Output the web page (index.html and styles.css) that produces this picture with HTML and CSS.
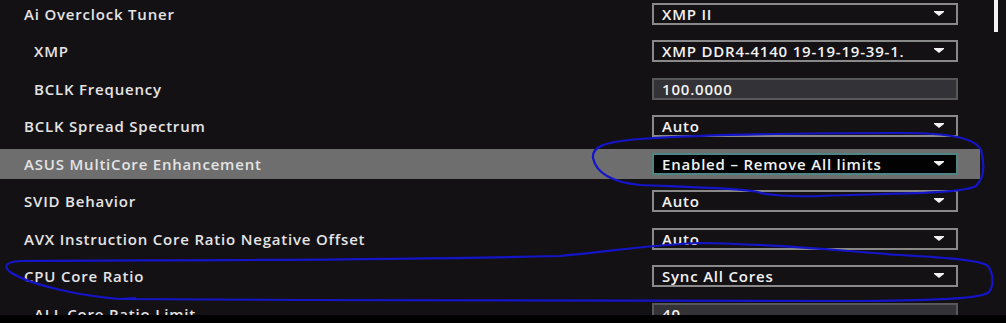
FILE: index.html
```html
<!DOCTYPE html>
<html>
  <head>
    <title>Ai Tweaker</title>
    <link rel="stylesheet" href="styles.css">
  </head>
  <body>
    <div class="screen">
      <div class="panel">
        <ul class="items">
          <li class="item">
            <span class="label">Ai Overclock Tuner</span>
            <div class="select"><span>XMP II</span><svg class="arrow" viewBox="0 0 10 6"><polygon points="0,0 10,0 10,1 5,5 0,1"/></svg></div>
          </li>
          <li class="item sub">
            <span class="label">XMP</span>
            <div class="select"><span>XMP DDR4-4140 19-19-19-39-1.</span><svg class="arrow" viewBox="0 0 10 6"><polygon points="0,0 10,0 10,1 5,5 0,1"/></svg></div>
          </li>
          <li class="item sub">
            <span class="label">BCLK Frequency</span>
            <div class="select input"><span>100.0000</span></div>
          </li>
          <li class="item">
            <span class="label">BCLK Spread Spectrum</span>
            <div class="select"><span>Auto</span><svg class="arrow" viewBox="0 0 10 6"><polygon points="0,0 10,0 10,1 5,5 0,1"/></svg></div>
          </li>
          <li class="item active">
            <span class="label">ASUS MultiCore Enhancement</span>
            <div class="select"><span>Enabled &ndash; Remove All limits</span><svg class="arrow" viewBox="0 0 10 6"><polygon points="0,0 10,0 10,1 5,5 0,1"/></svg></div>
          </li>
          <li class="item">
            <span class="label">SVID Behavior</span>
            <div class="select"><span>Auto</span><svg class="arrow" viewBox="0 0 10 6"><polygon points="0,0 10,0 10,1 5,5 0,1"/></svg></div>
          </li>
          <li class="item">
            <span class="label">AVX Instruction Core Ratio Negative Offset</span>
            <div class="select"><span>Auto</span><svg class="arrow" viewBox="0 0 10 6"><polygon points="0,0 10,0 10,1 5,5 0,1"/></svg></div>
          </li>
          <li class="item">
            <span class="label">CPU Core Ratio</span>
            <div class="select"><span>Sync All Cores</span><svg class="arrow" viewBox="0 0 10 6"><polygon points="0,0 10,0 10,1 5,5 0,1"/></svg></div>
          </li>
          <li class="item sub">
            <span class="label">ALL Core Ratio Limit</span>
            <div class="select input"><span>40</span></div>
          </li>
        </ul>
        <div class="scrollbar"><div class="thumb"></div></div>
      </div>
      <div class="bottom"></div>

      <!-- pen marks drawn over the screen -->
      <svg class="marks" viewBox="0 0 1006 323">
        <path d="M640 185 C 610 182, 596 172, 593 158 C 592 148, 600 142, 640 139 C 700 135, 800 133, 900 133 C 950 133, 975 138, 981 150 C 985 165, 984 178, 976 186 C 960 194, 900 193, 820 196 C 790 197, 765 195, 758 192 C 740 188, 690 187, 640 185"/>
        <path d="M120 299 C 80 296, 30 285, 10 272 C 3 266, 6 262, 20 261 C 150 260, 350 261, 560 256 C 620 250, 660 244, 700 243 C 780 244, 830 250, 900 255 C 950 258, 980 260, 988 266 C 994 275, 994 287, 988 293 C 975 299, 940 300, 860 301 C 700 302, 500 302, 300 300 C 220 300, 160 299, 120 299 L 135 298"/>
      </svg>
    </div>
  </body>
</html>
```

FILE: styles.css
```css
* {
  box-sizing: border-box;
  margin: 0;
}
body {
  background-color: #141114;
  font-family: "Open Sans", "Noto Sans", sans-serif;
  font-size: 15px;
  font-weight: 600;
  letter-spacing: 0.8px;
  color: #e4e4e4;
}
.screen {
  position: relative;
  width: 1006px;
  height: 323px;
  overflow: hidden;
}
.panel {
  display: flex;
  height: 315px;
  overflow: hidden;
}
.items {
  list-style: none;
  padding: 0;
  width: 980px;
  margin-top: -1.5px;
  display: flex;
  flex-direction: column;
  gap: 7.5px;
}
.item {
  flex: 0 0 30px;
  display: flex;
  align-items: center;
  padding-left: 24px;
  padding-right: 22px;
}
.item.sub {
  padding-left: 34px;
}
.item.active {
  background-color: #6e6e6e;
}
.label {
  flex: 1;
  white-space: nowrap;
}
.select {
  width: 306px;
  height: 22px;
  display: flex;
  align-items: center;
  justify-content: space-between;
  padding: 0 12px 0 8px;
  border: 2px solid #898989;
  background-color: #141114;
  color: #f2f2f2;
  white-space: nowrap;
  overflow: hidden;
}
.select.input {
  background-color: #333236;
  border-color: #58575a;
}
.item.active .select {
  background-color: #020202;
  border-color: #4f8585;
}
.arrow {
  flex: 0 0 10px;
  width: 10px;
  height: 6px;
  fill: #f2f2f2;
}
.scrollbar {
  flex: 1;
  padding-left: 14px;
}
.thumb {
  width: 4px;
  height: 32px;
  background-color: #f4f4f4;
}
.bottom {
  height: 8px;
  background-color: #000;
}
.marks {
  position: absolute;
  left: 0;
  top: 0;
  width: 1006px;
  height: 323px;
  fill: none;
  stroke: #1414c8;
  stroke-width: 2.2;
  stroke-linecap: round;
}
```
